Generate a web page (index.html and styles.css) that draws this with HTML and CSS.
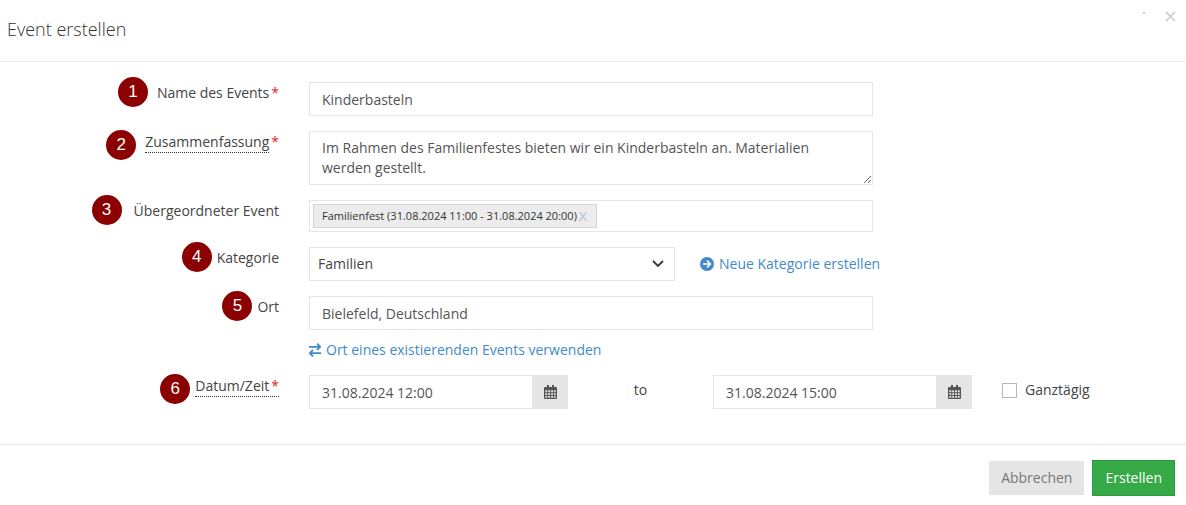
FILE: index.html
```html
<!DOCTYPE html>
<html lang="de">
<head>
<meta charset="utf-8">
<meta name="viewport" content="width=device-width, initial-scale=1">
<title>Event erstellen</title>
<link rel="stylesheet" href="styles.css">
</head>
<body>
<svg class="sprite" aria-hidden="true">
  <symbol id="calendar" viewBox="0 0 13 14">
    <path fill="currentColor" fill-rule="evenodd" d="M3 0h2v2h3V0h2v2h2q1 0 1 1v10q0 1-1 1H1q-1 0-1-1V3q0-1 1-1h2zM1.300 5.300v1.900h2V5.300zm2.900 0v1.900h1.900V5.300zm2.900 0v1.900H9V5.300zm2.800 0v1.900h1.800V5.300zM1.300 8.200v1.900h2V8.200zm2.900 0v1.900h1.900V8.200zm2.900 0v1.900H9V8.200zm2.800 0v1.900h1.800V8.200zM1.300 11.100v1.600h2v-1.600zm2.900 0v1.600h1.900v-1.600zm2.900 0v1.600H9v-1.600zm2.800 0v1.600h1.800v-1.600z"/>
  </symbol>
</svg>
<form class="dialog">
  <header class="dialog-header">
    <h1 class="title">Event erstellen</h1>
    <div class="window-tools">
      <span class="dot"></span>
      <button class="close" type="button" aria-label="Schließen">
        <svg width="11" height="11" viewBox="0 0 11 11"><path d="M1 1l9 9M10 1l-9 9" stroke="#c8c8c8" stroke-width="1.5" fill="none"/></svg>
      </button>
    </div>
  </header>

  <main class="dialog-body">
    <div class="row">
      <div class="label-cell gap-medium">
        <span class="step">1</span>
        <label for="name">Name des Events<span class="required">*</span></label>
      </div>
      <input class="control" id="name" type="text" value="Kinderbasteln">
    </div>

    <div class="row">
      <div class="label-cell gap-medium has-hint">
        <span class="step">2</span>
        <label for="summary"><span class="hint">Zusammenfassung</span><span class="required">*</span></label>
      </div>
      <textarea class="control summary" id="summary" rows="2">Im Rahmen des Familienfestes bieten wir ein Kinderbasteln an. Materialien werden gestellt.</textarea>
    </div>

    <div class="row">
      <div class="label-cell gap-wide">
        <span class="step">3</span>
        <label for="parent">Übergeordneter Event</label>
      </div>
      <div class="tag-box">
        <span class="tag">Familienfest (31.08.2024 11:00 - 31.08.2024 20:00)<button class="tag-remove" type="button" aria-label="Entfernen">X</button></span>
        <input class="tag-input" id="parent" type="text">
      </div>
    </div>

    <div class="row">
      <div class="label-cell">
        <span class="step">4</span>
        <label for="category">Kategorie</label>
      </div>
      <div class="category-cell">
        <div class="select-wrap">
          <select class="control category" id="category"><option>Familien</option></select>
          <svg class="chevron" width="12" height="8" viewBox="0 0 12 8"><path d="M1 1l5 5 5-5" fill="none" stroke="#333" stroke-width="1.800"/></svg>
        </div>
        <a class="link" href="#">
          <svg width="14" height="14" viewBox="0 0 14 14"><circle cx="7" cy="7" r="7" fill="#428bca"/><path d="M3 7h7M7 3.6L10.400 7 7 10.400" fill="none" stroke="#fff" stroke-width="1.600"/></svg>
          Neue Kategorie erstellen
        </a>
      </div>
    </div>

    <div class="row">
      <div class="label-cell">
        <span class="step">5</span>
        <label for="place">Ort</label>
      </div>
      <div class="place-cell">
        <input class="control" id="place" type="text" value="Bielefeld, Deutschland">
        <a class="link" href="#">
          <svg width="12" height="14" viewBox="0 0 12 14"><path d="M0 3.800h10.500M8 .6L11.200 3.800 8 7M12 10.200H1.500M4 7L.8 10.200 4 13.400" fill="none" stroke="#428bca" stroke-width="1.800"/></svg>
          Ort eines existierenden Events verwenden
        </a>
      </div>
    </div>

    <div class="row">
      <div class="label-cell has-hint">
        <span class="step">6</span>
        <label for="start"><span class="hint">Datum/Zeit<span class="required">*</span></span></label>
      </div>
      <div class="date-cell">
        <div class="date-group">
          <input class="control" id="start" type="text" value="31.08.2024 12:00">
          <button class="addon" type="button" aria-label="Startdatum wählen"><svg width="13" height="14"><use href="#calendar"/></svg></button>
        </div>
        <span class="to">to</span>
        <div class="date-group">
          <input class="control" type="text" aria-label="Ende" value="31.08.2024 15:00">
          <button class="addon" type="button" aria-label="Enddatum wählen"><svg width="13" height="14"><use href="#calendar"/></svg></button>
        </div>
        <label class="all-day"><input class="checkbox" type="checkbox">Ganztägig</label>
      </div>
    </div>
  </main>

  <footer class="dialog-footer">
    <button class="button" type="button">Abbrechen</button>
    <button class="button primary" type="submit">Erstellen</button>
  </footer>
</form>
</body>
</html>
```

FILE: styles.css
```css
* { box-sizing: border-box; }
body {
  margin: 0;
  background: #fff;
  color: #444;
  font: 14px/20px "Open Sans", "Noto Sans", sans-serif;
}
.sprite { display: none; }
svg { flex: none; }
input, select, textarea, button { font: inherit; margin: 0; border-radius: 0; }

.dialog-header {
  display: flex;
  justify-content: space-between;
  min-height: 62px;
  padding: 11px 10px 0 7px;
  border-bottom: 1px solid #eee;
}
.title { margin: 6px 0 0; font-size: 18px; line-height: 24px; font-weight: 300; color: #333; }
.window-tools { display: flex; align-items: flex-start; gap: 20px; }
.dot { width: 2px; height: 2px; margin-top: 1px; background: #ccc; }
.close { display: flex; padding: 0; border: 0; background: none; }

.dialog-body { display: grid; gap: 15px; padding: 20px 0 35px; }
.row {
  display: grid;
  grid-template-columns: minmax(0, 279fr) minmax(0, 564fr) minmax(0, 253fr);
  column-gap: 30px;
  padding-right: 30px;
}
.label-cell {
  display: flex;
  align-items: flex-start;
  justify-content: flex-end;
  gap: 5px;
}
.label-cell label { padding-top: 1px; }
.gap-medium { gap: 9px; }
.gap-wide { gap: 12px; }
.required { margin-left: 2px; color: #e02222; }
.hint { display: inline-block; border-bottom: 1px dotted #333; }
.step {
  width: 30px;
  height: 30px;
  margin: -5px 0;
  border-radius: 50%;
  background: #8b0000;
  color: #fff;
  font: 17px/30px "Liberation Sans", Arial, sans-serif;
  text-align: center;
}
.has-hint .step { margin: -1px 0; }

.control {
  display: block;
  width: 100%;
  min-width: 0;
  height: 34px;
  padding: 6px 12px;
  border: 1px solid #e5e5e5;
  background: #fff;
  color: #555;
}
.summary { height: 54px; resize: vertical; }

.tag-box { display: flex; height: 32px; padding: 3px; border: 1px solid #e5e5e5; }
.tag {
  display: flex;
  flex: none;
  align-items: center;
  gap: 2px;
  padding: 0 9px 0 8px;
  border: 1px solid #d5d5d5;
  background: #ececec;
  color: #333;
  font-size: 11px;
}
.tag-remove { padding: 0; border: 0; background: none; color: #c8c8c8; font-size: 13px; font-weight: 600; }
.tag-input { flex: 1; min-width: 0; border: 0; outline: 0; background: none; }

.category-cell, .date-cell { grid-column: 2 / 4; }
.category-cell {
  display: grid;
  grid-template-columns: minmax(0, 366fr) minmax(0, 456fr);
  column-gap: 25px;
  align-items: center;
}
.select-wrap { position: relative; }
.category { appearance: none; padding: 0 30px 0 8px; color: #444; }
.chevron { position: absolute; right: 11px; top: 13px; pointer-events: none; }
.link { display: flex; align-items: center; gap: 5px; color: #428bca; text-decoration: none; }
.place-cell { display: grid; gap: 10px; }

.date-cell {
  display: grid;
  grid-template-columns: minmax(0, 259fr) minmax(0, 145fr) minmax(0, 259fr) minmax(0, 184fr);
}
.date-group { display: flex; }
.addon {
  display: flex;
  flex: none;
  align-items: center;
  justify-content: center;
  width: 35px;
  padding: 0;
  border: 0;
  background: #e5e5e5;
  color: #555;
}
.to { padding-top: 5px; text-align: center; }
.all-day { display: flex; align-items: center; gap: 8px; height: 30px; padding-left: 30px; }
.checkbox { appearance: none; width: 15px; height: 15px; border: 1px solid #b5b5b5; background: #fff; }
.checkbox:checked { background: #428bca; }

.dialog-footer {
  display: flex;
  align-items: center;
  justify-content: flex-end;
  gap: 8px;
  padding: 15px 11px 9px;
  border-top: 1px solid #e5e5e5;
}
.button { padding: 7px 12px; border: 0; background: #e5e5e5; color: #777; }
.primary { border: 1px solid #2c9a41; background: #35aa47; color: #fff; font-weight: 500; }
```
